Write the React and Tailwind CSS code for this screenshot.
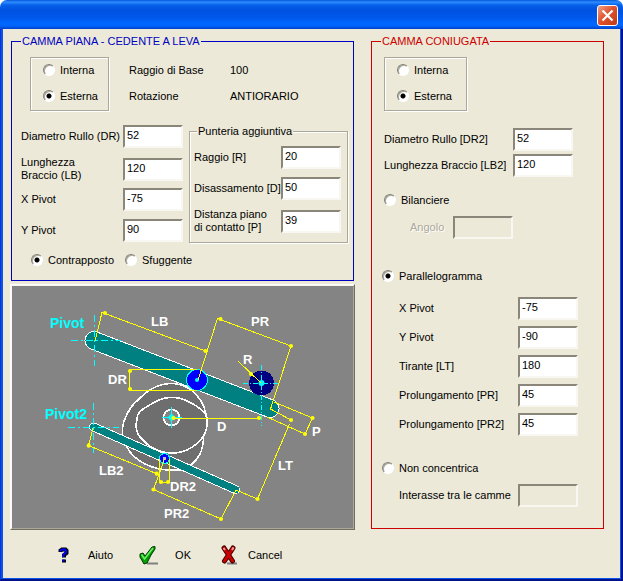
import React, { useState } from 'react';
import { clsx } from 'clsx';

const Radio = ({ id, name, label, checked, onSelect }) => (
  <div className="flex items-center gap-[5px] h-4">
    <input
      type="radio"
      id={id}
      name={name}
      checked={checked}
      onChange={onSelect}
      className="appearance-none shrink-0 w-3 h-3 rounded-full border border-t-[#808078] border-l-[#808078] border-r-white border-b-white bg-white shadow-[inset_1px_1px_0_#aca899] checked:bg-[radial-gradient(circle,#000_2px,#fff_3px)]"
    />
    <label htmlFor={id} className="whitespace-nowrap">{label}</label>
  </div>
);

const Field = ({ id, label, defaultValue, labelWidth, disabled, dimmed }) => (
  <div className="flex items-center">
    <label
      htmlFor={id}
      className={clsx(
        'shrink-0 whitespace-pre-line',
        labelWidth,
        dimmed && 'text-[#aca899] [text-shadow:1px_1px_0_#fff]'
      )}
    >
      {label}
    </label>
    <input
      type="text"
      id={id}
      defaultValue={defaultValue}
      disabled={disabled}
      className="w-[60px] h-[23px] shrink-0 px-[2px] pb-[3px] bg-white border-2 border-t-[#8a877a] border-l-[#8a877a] border-r-[#f8f7f2] border-b-[#f8f7f2] outline-none disabled:bg-[#ece9d8]"
    />
  </div>
);

// Interna / Esterna selector, used by both cams
const SideSelector = ({ name, value, onChange, className }) => (
  <div
    className={clsx(
      'flex flex-col gap-[10px] pt-1 pb-1.5 pl-3 border border-[#aca899] shadow-[1px_1px_0_#fff,inset_1px_1px_0_#fff]',
      className
    )}
  >
    <Radio id={`${name}-interna`} name={name} label="Interna" checked={value === 'interna'} onSelect={() => onChange('interna')} />
    <Radio id={`${name}-esterna`} name={name} label="Esterna" checked={value === 'esterna'} onSelect={() => onChange('esterna')} />
  </div>
);

const yellowDots = [
  [105, 313], [205.5, 351], [220.5, 319], [291, 346], [130, 371], [130, 389],
  [251, 374], [312.5, 418], [291, 420], [305, 434], [257.5, 499], [221, 519],
  [153.5, 489.5], [88.7, 445.7], [156.7, 473.7], [161, 482], [168, 482], [173.5, 418], [259, 418]
];

const captions = [
  ['LB', 151, 326], ['PR', 251, 326], ['R', 243, 364], ['DR', 108, 384], ['D', 217, 431],
  ['P', 312, 436], ['LT', 278, 470], ['LB2', 99, 475], ['DR2', 170, 491], ['PR2', 164, 518]
];

const CamDiagram = () => (
  <svg viewBox="12 286 341 242" className="block w-full bg-[#848484]" role="img" aria-label="Schema camma">
    {/* Cams */}
    <g stroke="#fff" strokeWidth="1.600" shapeRendering="crispEdges">
      <path fill="#6e6e6e" d="M170 383.500C155 384 145 393 138 400C130 406 127 414 124 421C121 430 122 439 127 447C131 455 137 460 145 464C155 469 168 471 181 470C190 468 196 461 200 454C204 446 203 440 204 434C207 428 208 420 206 414C204 404 199 396 190 389C183 385 177 383 170 383.500Z" />
      <path fill="#6e6e6e" d="M169 397.500C161 398 154 402 148 406C141 410 137 413 137 419C135 427 137 435 143 440C150 448 160 453 173 453C187 453 198 444 203 437C207 431 208 423 206 415C201 408 194 404 187 401C181 398 175 397 169 397.500Z" />
      <circle cx="171.500" cy="417.500" r="8" fill="#848484" />
    </g>

    {/* Levers */}
    <g strokeLinecap="round" shapeRendering="crispEdges">
      <path d="M94 340.500L270 408.500" stroke="#fff" strokeWidth="19" />
      <path d="M94 340.500L270 408.500" stroke="#008080" strokeWidth="17" />
      <path d="M93.500 427L235.500 489.500" stroke="#fff" strokeWidth="9" />
      <path d="M93.500 427L235.500 489.500" stroke="#008080" strokeWidth="7" />
    </g>

    {/* Rollers */}
    <g shapeRendering="crispEdges">
      <circle cx="197" cy="380" r="10.500" fill="#0000ff" stroke="#00ffff" />
      <circle cx="261.500" cy="383" r="12.500" fill="#000080" />
      <circle cx="164.500" cy="458.500" r="5" fill="#0000ff" stroke="#00ffff" />
      <rect x="163" y="457" width="3" height="3" fill="#c0c0c0" />
    </g>
    <circle cx="197" cy="380" r="2" fill="#00ffff" />

    {/* Centre lines */}
    <g stroke="#00ffff" fill="none" shapeRendering="crispEdges">
      <path strokeDasharray="7 3 2 3" d="M71 340.500H121M94.500 315V366M68 427.500H119M93.500 403V453" />
      <path strokeDasharray="5 2 1 2" d="M243 383.500H280M261.500 365V426" />
      <path d="M171.500 407V428M162 417.500H182" />
    </g>
    <circle cx="261.500" cy="383" r="3" fill="#00ffff" />
    <path d="M171.500 413.500L175.500 417.500L171.500 421.500L167.500 417.500Z" fill="#00ffff" />

    {/* Dimension lines */}
    <g stroke="#ffff00" fill="none" strokeWidth="1" shapeRendering="crispEdges">
      <path d="M95 341L102 312.500L205.500 351" />
      <path d="M198 380L217.500 318.500L291 346L270.500 409L291 420" />
      <path d="M197 369.500H129.500V390.500H197" />
      <path d="M238 361L261 383" />
      <path d="M274 402L312.500 418L305 434L267 417" />
      <path d="M289.500 424L257.500 499L236 490L221 519L153.500 489.500L164.500 459" />
      <path d="M93 428L88.500 445.500L156.700 473.700" />
      <path d="M159.500 459V482.500H169.500V459" />
      <path d="M173 418.500H259" />
    </g>
    {yellowDots.map(([cx, cy]) => (
      <circle key={`${cx}-${cy}`} cx={cx} cy={cy} r="2.100" fill="#ffff00" />
    ))}

    <g className="font-bold" fill="#fff" fontSize="13">
      {captions.map(([text, x, y]) => (
        <text key={text} x={x} y={y}>{text}</text>
      ))}
    </g>
    <g className="font-bold" fill="#00ffff" fontSize="14">
      <text x="50" y="328">Pivot</text>
      <text x="45" y="419">Pivot2</text>
    </g>
  </svg>
);

const HelpIcon = () => (
  <svg viewBox="0 0 20 20" className="w-5 h-5" fill="none">
    <path d="M6.500 7V5.500L8 4.500H11.500L12.500 5.500V8L10 10V12.500M10 14.500V17.500" stroke="#000" strokeWidth="4" />
    <path d="M6.500 6.500V5.500L8 4.500H11L12 5.500V7.500L9.500 9.500V12M9.500 14.500V16.500" stroke="#0000ff" strokeWidth="2" />
  </svg>
);

const CheckIcon = () => (
  <svg viewBox="0 0 20 20" className="w-5 h-5">
    <path d="M8 18.500H19" stroke="#808080" strokeWidth="2" />
    <path d="M1 9L4 8L6 11L13 2L16 1.500V4L12 10L8 18L5 19L1 12Z" fill="#00a000" stroke="#003800" />
    <path d="M2.500 9.500L5.500 14L14 3" fill="none" stroke="#70f070" strokeWidth="1.500" />
  </svg>
);

const CancelIcon = () => (
  <svg viewBox="-3 0 20 20" className="w-5 h-5" fill="none">
    <path d="M7 18.500H17" stroke="#808080" strokeWidth="2" />
    <path d="M4 3L12.500 16M13 3L4.500 16" stroke="#400000" strokeWidth="5" strokeLinecap="round" />
    <path d="M4 3L12.500 16M13 3L4.500 16" stroke="#cc0000" strokeWidth="3" strokeLinecap="round" />
    <path d="M3.500 3L5 5M13.500 2.500L12 5" stroke="#ff9c9c" strokeWidth="2" />
  </svg>
);

const App = () => {
  const [side, setSide] = useState('esterna');
  const [side2, setSide2] = useState('esterna');
  const [direction, setDirection] = useState('contrapposto');
  const [linkage, setLinkage] = useState('parallelogramma');

  return (
    <div className="min-h-screen flex flex-col bg-white font-['Liberation_Sans',Arial,sans-serif] text-[11px] leading-[13px] text-black">
      {/* Title bar */}
      <header className="h-[29px] shrink-0 flex items-center justify-end pr-[5px] pt-px rounded-t-[7px] bg-[linear-gradient(180deg,#0058d8_0%,#2f8cff_7%,#0560e8_18%,#0052e0_35%,#0058ec_60%,#0068ff_82%,#0062f8_90%,#0040c8_100%)]">
        <button
          type="button"
          aria-label="Chiudi"
          className="w-[21px] h-[21px] flex items-center justify-center rounded-[3px] border border-white bg-[linear-gradient(135deg,#f0a088_0%,#e0532f_45%,#c03a14_100%)]"
        >
          <svg viewBox="0 0 13 13" className="w-[13px] h-[13px]">
            <path d="M1.500 1.500L11.500 11.500M11.500 1.500L1.500 11.500" stroke="#fff" strokeWidth="2.200" />
          </svg>
        </button>
      </header>

      <div className="flex-1 flex flex-col border-l border-r-2 border-b-2 border-l-[#0831d9] border-r-[#00138c] border-b-[#00138c]">
        <div className="flex-1 flex flex-col border-l-2 border-r border-b border-[#0855e8] bg-[#ece9d8]">
          <main className="grid grid-cols-[345fr_233fr] gap-4 pl-[7px] pr-4 pt-1.5">
            <div className="min-w-0">
              {/* Main cam */}
              <fieldset className="mx-px min-w-0 pl-[9px] pr-[5px] pb-3 border border-solid border-[#0000c0]">
                <legend className="px-px text-[#0000c0]">CAMMA PIANA - CEDENTE A LEVA</legend>

                <div className="flex mt-[9px] pl-[9px]">
                  <SideSelector name="camma" value={side} onChange={setSide} className="w-[79px]" />
                  <dl className="grid grid-cols-[101px_auto] gap-y-[10px] ml-5 pt-[5px] content-start leading-4">
                    <dt>Raggio di Base</dt>
                    <dd>100</dd>
                    <dt>Rotazione</dt>
                    <dd>ANTIORARIO</dd>
                  </dl>
                </div>

                <div className="flex gap-1.5 mt-[14px]">
                  <div className="flex flex-col gap-1.5">
                    <div className="flex flex-col gap-2">
                      <Field id="dr" label="Diametro Rullo (DR)" defaultValue="52" labelWidth="w-[102px]" />
                      <Field id="lb" label={'Lunghezza\nBraccio (LB)'} defaultValue="120" labelWidth="w-[102px]" />
                    </div>
                    <div className="flex flex-col gap-2">
                      <Field id="xp" label="X Pivot" defaultValue="-75" labelWidth="w-[102px]" />
                      <Field id="yp" label="Y Pivot" defaultValue="90" labelWidth="w-[102px]" />
                    </div>
                  </div>

                  <fieldset className="flex-1 min-w-0 pl-1 pb-2 border border-[#aca899] shadow-[1px_1px_0_#fff,inset_1px_1px_0_#fff]">
                    <legend className="ml-[3px] px-px bg-[#ece9d8]">Punteria aggiuntiva</legend>
                    <div className="flex flex-col gap-2 pt-2">
                      <Field id="r" label="Raggio [R]" defaultValue="20" labelWidth="w-[87px]" />
                      <Field id="d" label="Disassamento [D]" defaultValue="50" labelWidth="w-[87px]" />
                      <Field id="p" label={'Distanza piano\ndi contatto [P]'} defaultValue="39" labelWidth="w-[87px]" />
                    </div>
                  </fieldset>
                </div>

                <div className="grid grid-cols-[94px_auto] justify-start mt-[9px] pl-[10px]">
                  <Radio id="contrapposto" name="verso" label="Contrapposto" checked={direction === 'contrapposto'} onSelect={() => setDirection('contrapposto')} />
                  <Radio id="sfuggente" name="verso" label="Sfuggente" checked={direction === 'sfuggente'} onSelect={() => setDirection('sfuggente')} />
                </div>
              </fieldset>

              {/* Drawing */}
              <div className="mt-[3px] border border-t-white border-l-white border-r-[#716f64] border-b-[#716f64]">
                <div className="border border-t-[#f8f7f2] border-l-[#f8f7f2] border-r-[#aca899] border-b-[#aca899]">
                  <CamDiagram />
                </div>
              </div>
            </div>

            {/* Conjugate cam */}
            <fieldset className="min-w-0 self-start pl-[9px] pb-[21px] border border-solid border-[#cc0000]">
              <legend className="px-px text-[#cc0000]">CAMMA CONIUGATA</legend>

              <div className="mt-[9px] pl-[3px]">
                <SideSelector name="camma2" value={side2} onChange={setSide2} className="w-[83px]" />
                <div className="flex flex-col gap-[3px] mt-[17px]">
                  <Field id="dr2" label="Diametro Rullo [DR2]" defaultValue="52" labelWidth="w-[129px]" />
                  <Field id="lb2" label="Lunghezza Braccio [LB2]" defaultValue="120" labelWidth="w-[129px]" />
                </div>
                <div className="flex flex-col gap-2 mt-[15px]">
                  <Radio id="bilanciere" name="tipo" label="Bilanciere" checked={linkage === 'bilanciere'} onSelect={() => setLinkage('bilanciere')} />
                  <div className="pl-[26px]">
                    <Field id="angolo" label="Angolo" labelWidth="w-[43px]" disabled dimmed />
                  </div>
                </div>
              </div>

              <div className="mt-[29px] pl-px">
                <Radio id="parallelogramma" name="tipo" label="Parallelogramma" checked={linkage === 'parallelogramma'} onSelect={() => setLinkage('parallelogramma')} />
                <div className="flex flex-col gap-1.5 mt-[13px] pl-[17px]">
                  <Field id="xp2" label="X Pivot" defaultValue="-75" labelWidth="w-[119px]" />
                  <Field id="yp2" label="Y Pivot" defaultValue="-90" labelWidth="w-[119px]" />
                  <Field id="lt" label="Tirante [LT]" defaultValue="180" labelWidth="w-[119px]" />
                  <Field id="pr" label="Prolungamento [PR]" defaultValue="45" labelWidth="w-[119px]" />
                  <Field id="pr2" label="Prolungamento [PR2]" defaultValue="45" labelWidth="w-[119px]" />
                </div>
              </div>

              <div className="flex flex-col gap-2 mt-6 pl-px">
                <Radio id="nonconcentrica" name="tipo" label="Non concentrica" checked={linkage === 'nonconcentrica'} onSelect={() => setLinkage('nonconcentrica')} />
                <div className="pl-[17px]">
                  <Field id="interasse" label="Interasse tra le camme" labelWidth="w-[119px]" disabled />
                </div>
              </div>
            </fieldset>
          </main>

          {/* Actions */}
          <footer className="flex items-center gap-[26px] mt-[15px] pl-[51px] pb-[13px]">
            <button type="button" className="flex items-center gap-[14px]">
              <HelpIcon />
              Aiuto
            </button>
            <button type="button" className="flex items-center gap-4">
              <CheckIcon />
              OK
            </button>
            <button type="button" className="flex items-center gap-[11px]">
              <CancelIcon />
              Cancel
            </button>
          </footer>
        </div>
      </div>
    </div>
  );
};

export default App;
